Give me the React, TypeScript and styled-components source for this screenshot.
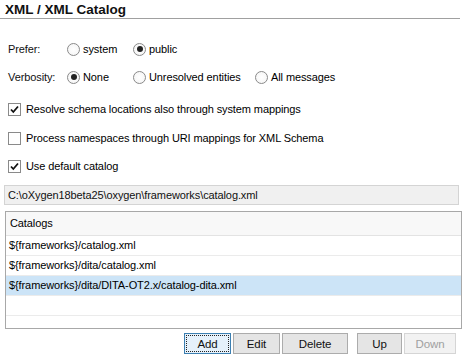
import React, { useState } from 'react';
import styled, { createGlobalStyle } from 'styled-components';

const GlobalStyle = createGlobalStyle`
  html, body {
    margin: 0;
    padding: 0;
    background: #ffffff;
  }
  body {
    font-family: 'Liberation Sans', Arial, sans-serif;
    font-size: 11px;
    letter-spacing: -0.1px;
    color: #000;
  }
`;

const catalogs = [
  '${frameworks}/catalog.xml',
  '${frameworks}/dita/catalog.xml',
  '${frameworks}/dita/DITA-OT2.x/catalog-dita.xml',
];

function Radio({ checked, label, onClick }: { checked: boolean; label: string; onClick: () => void }) {
  return (
    <Option onClick={onClick}>
      <RadioCircle $checked={checked} />
      <span>{label}</span>
    </Option>
  );
}

function Check({ checked, label, onClick }: { checked: boolean; label: string; onClick: () => void }) {
  return (
    <CheckRow onClick={onClick}>
      <Box>
        {checked && (
          <svg width="11" height="11" viewBox="0 0 11 11">
            <path d="M2 5.5 L4.3 8 L9 2.5" fill="none" stroke="#111" strokeWidth="1.8" />
          </svg>
        )}
      </Box>
      <span>{label}</span>
    </CheckRow>
  );
}

function App() {
  const [prefer, setPrefer] = useState('public');
  const [verbosity, setVerbosity] = useState('none');
  const [resolve, setResolve] = useState(true);
  const [namespaces, setNamespaces] = useState(false);
  const [useDefault, setUseDefault] = useState(true);
  const [selected, setSelected] = useState(2);

  return (
    <Wrap>
      <GlobalStyle />
      <Title>XML / XML Catalog</Title>

      <RadioRow $mt={20}>
        <Label>Prefer:</Label>
        <Radio checked={prefer === 'system'} label="system" onClick={() => setPrefer('system')} />
        <Radio checked={prefer === 'public'} label="public" onClick={() => setPrefer('public')} />
      </RadioRow>

      <RadioRow $mt={8}>
        <Label>Verbosity:</Label>
        <Radio checked={verbosity === 'none'} label="None" onClick={() => setVerbosity('none')} />
        <Radio
          checked={verbosity === 'unresolved'}
          label="Unresolved entities"
          onClick={() => setVerbosity('unresolved')}
        />
        <Radio checked={verbosity === 'all'} label="All messages" onClick={() => setVerbosity('all')} />
      </RadioRow>

      <Spacer $h={12} />
      <Check
        checked={resolve}
        label="Resolve schema locations also through system mappings"
        onClick={() => setResolve(!resolve)}
      />
      <Spacer $h={9} />
      <Check
        checked={namespaces}
        label="Process namespaces through URI mappings for XML Schema"
        onClick={() => setNamespaces(!namespaces)}
      />
      <Spacer $h={8} />
      <Check checked={useDefault} label="Use default catalog" onClick={() => setUseDefault(!useDefault)} />

      <PathField>C:\oXygen18beta25\oxygen\frameworks\catalog.xml</PathField>

      <Table>
        <HeaderCell>Catalogs</HeaderCell>
        {catalogs.map((c, i) => (
          <Cell key={c} $selected={selected === i} onClick={() => setSelected(i)}>
            {c}
          </Cell>
        ))}
        <Cell $selected={false} />
      </Table>

      <Buttons>
        <Button $focused>Add</Button>
        <Button>Edit</Button>
        <Button $w={66}>Delete</Button>
        <Button $w={45} $ml={7}>Up</Button>
        <Button $w={52} disabled>Down</Button>
      </Buttons>
    </Wrap>
  );
}

const Wrap = styled.div`
  width: 466px;
  height: 359px;
  box-sizing: border-box;
  padding: 0 4px 0 0;
  display: flex;
  flex-direction: column;
  overflow: hidden;
`;

const Title = styled.div`
  height: 18px;
  line-height: 20px;
  padding-left: 5px;
  margin-right: 2px;
  font-size: 13.5px;
  letter-spacing: 0;
  font-weight: bold;
  border-bottom: 1px solid #a0a0a0;
  color: #111;
`;

const RadioRow = styled.div<{ $mt: number }>`
  margin-top: ${(p) => p.$mt}px;
  height: 20px;
  display: grid;
  grid-template-columns: 59px 66px 122px auto;
  align-items: center;
  padding-left: 8px;
`;

const Label = styled.span`
  color: #111;
`;

const Option = styled.label`
  display: flex;
  align-items: center;
  gap: 3px;
  cursor: default;
`;

const RadioCircle = styled.span<{ $checked: boolean }>`
  width: 11px;
  height: 11px;
  border: 1px solid #8a8a8a;
  border-radius: 50%;
  background: radial-gradient(circle, #fff 0%, #f3f3f3 100%);
  display: flex;
  align-items: center;
  justify-content: center;
  &::after {
    content: '';
    display: ${(p) => (p.$checked ? 'block' : 'none')};
    width: 6px;
    height: 6px;
    border-radius: 50%;
    background: #222;
  }
`;

const Spacer = styled.div<{ $h: number }>`
  height: ${(p) => p.$h}px;
  flex: none;
`;

const CheckRow = styled.label`
  height: 20px;
  display: flex;
  align-items: center;
  gap: 5px;
  padding-left: 8px;
  cursor: default;
`;

const Box = styled.span`
  width: 11px;
  height: 11px;
  border: 1px solid #8a8a8a;
  background: #fff;
  display: flex;
  align-items: center;
  justify-content: center;
`;

const PathField = styled.div`
  margin: 9px 3px 0 4px;
  height: 18px;
  line-height: 18px;
  padding-left: 3px;
  background: #f0f0f0;
  border: 1px solid #d4d4d4;
  color: #111;
  white-space: nowrap;
`;

const Table = styled.div`
  margin: 6px 0 0 5px;
  height: 116px;
  border: 1px solid #a8a8a8;
  display: flex;
  flex-direction: column;
  background: #fff;
`;

const HeaderCell = styled.div`
  height: 23px;
  line-height: 23px;
  padding-left: 4px;
  background: #f8f8f8;
  border-bottom: 1px solid #e3e3e3;
`;

const Cell = styled.div<{ $selected: boolean }>`
  height: 19px;
  line-height: 19px;
  padding-left: 3px;
  border-bottom: 1px solid #ebebeb;
  background: ${(p) => (p.$selected ? '#cce4f7' : '#fff')};
  white-space: nowrap;
`;

const Buttons = styled.div`
  margin-top: 4px;
  display: flex;
  justify-content: flex-end;
  gap: 2px;
  padding-right: 6px;
`;

const Button = styled.button<{ $focused?: boolean; $w?: number; $ml?: number }>`
  width: ${(p) => p.$w ?? 47}px;
  height: 21px;
  margin-left: ${(p) => p.$ml ?? 0}px;
  padding: 0;
  font-family: 'Liberation Sans', Arial, sans-serif;
  font-size: 11.5px;
  letter-spacing: -0.1px;
  color: #111;
  background: ${(p) => (p.$focused ? '#e5f1fb' : '#e5e5e5')};
  border: 1px solid ${(p) => (p.$focused ? '#3c7fb1' : '#acacac')};
  outline: ${(p) => (p.$focused ? '1px dotted #222' : 'none')};
  outline-offset: -3px;
  &:disabled {
    color: #a0a0a0;
    background: #f2f2f2;
    border-color: #d5d5d5;
  }
`;

export default App;
